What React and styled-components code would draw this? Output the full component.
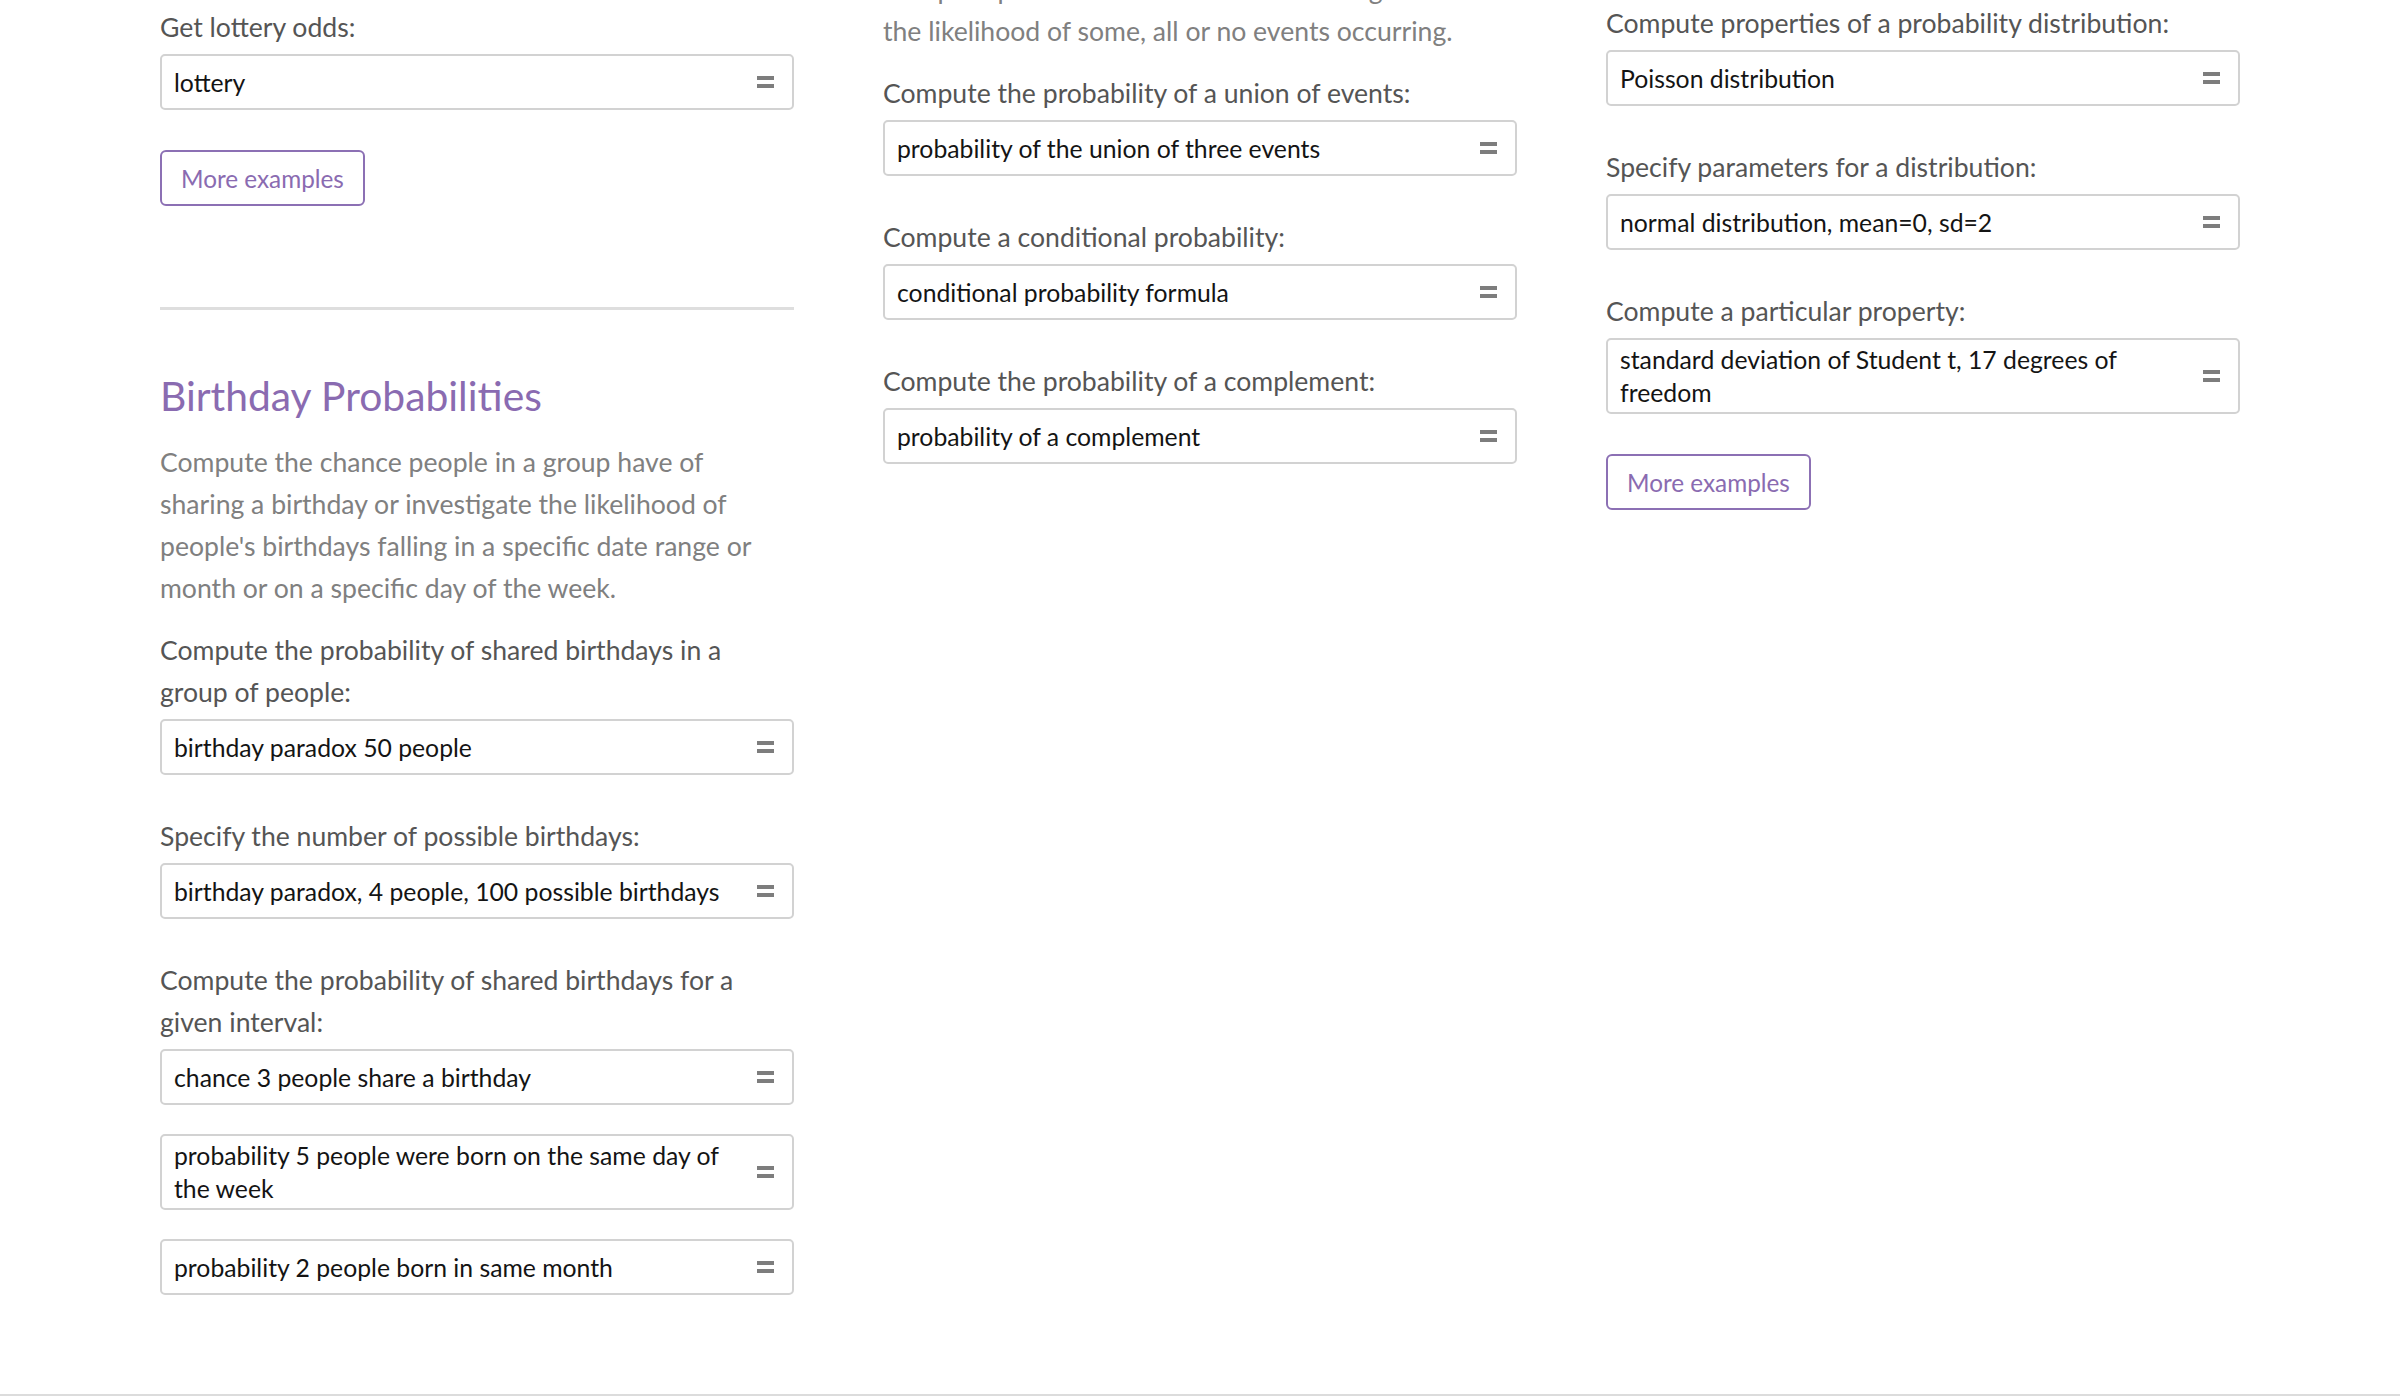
import React from "react";
import styled, { createGlobalStyle } from "styled-components";

const FONT = `Lato, "Noto Sans", "Liberation Sans", sans-serif`;

const GlobalStyle = createGlobalStyle`
  html, body {
    margin: 0;
    padding: 0;
    background: #ffffff;
    font-family: ${FONT};
    overflow: hidden;
  }
  * { box-sizing: border-box; }
`;

const Page = styled.div`
  height: 100vh;
  display: flex;
  flex-direction: column;
  overflow: hidden;
`;

const Main = styled.main`
  flex: 1;
  display: grid;
  grid-template-columns: repeat(3, 1fr);
  column-gap: 89px;
  padding: 0 160px;
  align-items: start;
  overflow: hidden;
`;

const Column = styled.section`
  display: flex;
  flex-direction: column;
  margin-top: ${(p) => p.$offset}px;
`;

const Footer = styled.footer`
  height: 4px;
  flex-shrink: 0;
  border-top: 2px solid #dcdcdc;
`;

const Heading = styled.h2`
  margin: 0 0 20px;
  font-size: 40.8px;
  line-height: 50px;
  font-weight: 400;
  color: #8a6bb1;
`;

const Paragraph = styled.p`
  margin: 0 0 20px;
  max-width: 610px;
  font-size: 26.6px;
  line-height: 42px;
  color: #808080;
`;

const Group = styled.div`
  display: flex;
  flex-direction: column;
  & + & {
    margin-top: 40px;
  }
`;

const Label = styled.div`
  max-width: 610px;
  font-size: 26.6px;
  line-height: 42px;
  color: #555555;
  margin-bottom: 6px;
`;

const InputList = styled.div`
  display: flex;
  flex-direction: column;
  gap: 29px;
`;

const InputBox = styled.div`
  display: flex;
  align-items: center;
  min-height: 56px;
  border: 2px solid #d2d2d2;
  border-radius: 5px;
  padding: 3px 18px 3px 12px;
  background: #ffffff;
`;

const InputText = styled.span`
  flex: 1;
  font-size: 24.75px;
  line-height: 33px;
  color: #141414;
`;

const EqualsIcon = styled.svg`
  flex-shrink: 0;
  width: 17px;
  height: 12px;
  margin-left: 16px;
`;

const MoreButton = styled.button`
  align-self: flex-start;
  margin-top: 40px;
  height: 56px;
  padding: 0 19px;
  border: 2px solid #8c70b4;
  border-radius: 6px;
  background: #ffffff;
  color: #8a6bb1;
  font-family: ${FONT};
  font-size: 24.3px;
  cursor: pointer;
`;

const Divider = styled.hr`
  margin: 101px 0 61px;
  border: 0;
  height: 3px;
  background: #dedede;
`;

const Equals = () => (
  <EqualsIcon viewBox="0 0 17 12" aria-hidden="true">
    <rect x="0" y="0" width="17" height="4" fill="#7d7d7d" />
    <rect x="0" y="8" width="17" height="4" fill="#7d7d7d" />
  </EqualsIcon>
);

const Input = ({ children }) => (
  <InputBox>
    <InputText>{children}</InputText>
    <Equals />
  </InputBox>
);

const Example = ({ label, items }) => (
  <Group>
    <Label>{label}</Label>
    <InputList>
      {items.map((t) => (
        <Input key={t}>{t}</Input>
      ))}
    </InputList>
  </Group>
);

export default function App() {
  return (
    <Page>
      <GlobalStyle />
      <Main>
        <Column $offset={6}>
          <Example label="Get lottery odds:" items={["lottery"]} />
          <MoreButton>More examples</MoreButton>
          <Divider />
          <Heading>Birthday Probabilities</Heading>
          <Paragraph>
            Compute the chance people in a group have of sharing a birthday or
            investigate the likelihood of people's birthdays falling in a
            specific date range or month or on a specific day of the week.
          </Paragraph>
          <Example
            label="Compute the probability of shared birthdays in a group of people:"
            items={["birthday paradox 50 people"]}
          />
          <Example
            label="Specify the number of possible birthdays:"
            items={["birthday paradox, 4 people, 100 possible birthdays"]}
          />
          <Example
            label="Compute the probability of shared birthdays for a given interval:"
            items={[
              "chance 3 people share a birthday",
              "probability 5 people were born on the same day of the week",
              "probability 2 people born in same month",
            ]}
          />
        </Column>

        <Column $offset={-32}>
          <Paragraph>
            Compute probabilities of events or investigate
            <br />
            the likelihood of some, all or no events occurring.
          </Paragraph>
          <Example
            label="Compute the probability of a union of events:"
            items={["probability of the union of three events"]}
          />
          <Example
            label="Compute a conditional probability:"
            items={["conditional probability formula"]}
          />
          <Example
            label="Compute the probability of a complement:"
            items={["probability of a complement"]}
          />
        </Column>

        <Column $offset={2}>
          <Example
            label="Compute properties of a probability distribution:"
            items={["Poisson distribution"]}
          />
          <Example
            label="Specify parameters for a distribution:"
            items={["normal distribution, mean=0, sd=2"]}
          />
          <Example
            label="Compute a particular property:"
            items={["standard deviation of Student t, 17 degrees of freedom"]}
          />
          <MoreButton>More examples</MoreButton>
        </Column>
      </Main>
      <Footer />
    </Page>
  );
}
